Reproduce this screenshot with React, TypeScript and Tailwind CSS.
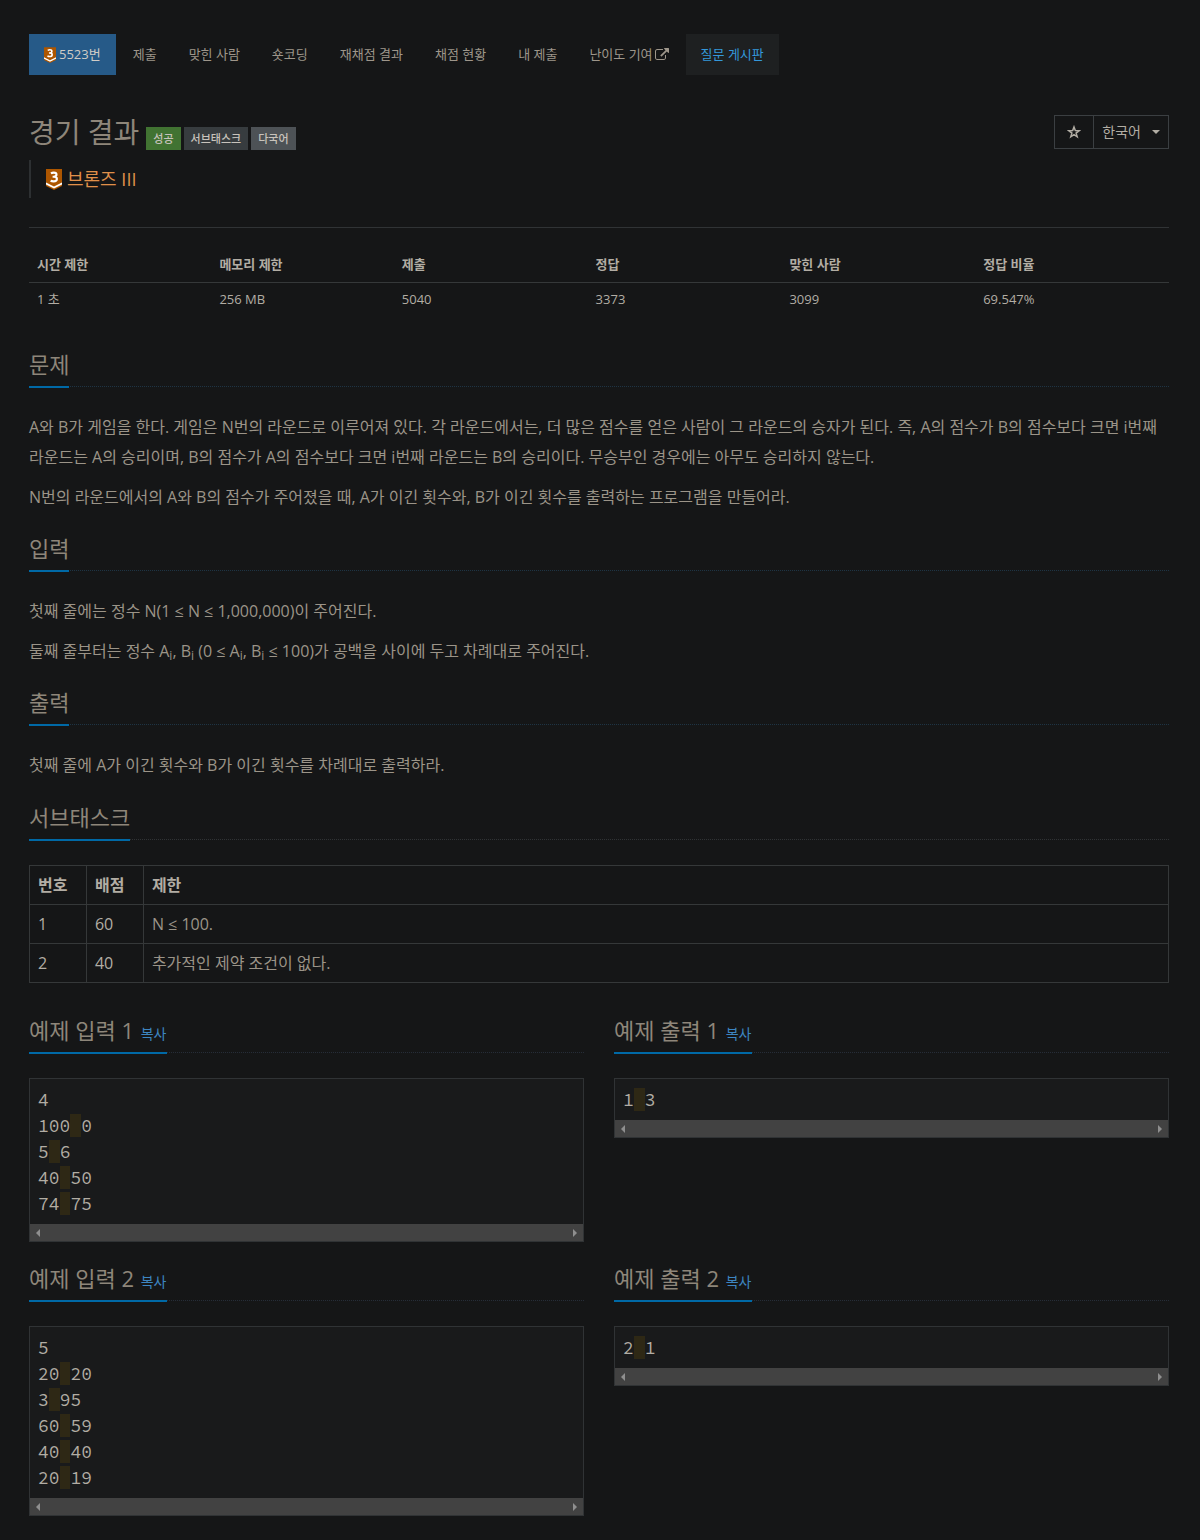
import clsx from 'clsx';
import type { ReactNode } from 'react';

const navItems = ['제출', '맞힌 사람', '숏코딩', '재채점 결과', '채점 현황', '내 제출'];

const stats = [
  { label: '시간 제한', value: '1 초', width: 'w-[16%]' },
  { label: '메모리 제한', value: '256 MB', width: 'w-[16%]' },
  { label: '제출', value: '5040', width: 'w-[17%]' },
  { label: '정답', value: '3373', width: 'w-[17%]' },
  { label: '맞힌 사람', value: '3099', width: 'w-[17%]' },
  { label: '정답 비율', value: '69.547%', width: 'w-[17%]' },
];

const subtasks = [
  { id: 1, score: 60, limit: 'N ≤ 100.' },
  { id: 2, score: 40, limit: '추가적인 제약 조건이 없다.' },
];

const samples = [
  { id: 1, input: ['4', '100 0', '5 6', '40 50', '74 75'], output: ['1 3'] },
  { id: 2, input: ['5', '20 20', '3 95', '60 59', '40 40', '20 19'], output: ['2 1'] },
];

function TierIcon({ className }: { className: string }) {
  return (
    <svg viewBox="0 0 16 21" className={className} aria-hidden="true">
      <path d="M0 0h16v17l-8 4-8-4z" fill="#ad5600" />
      <path d="M0 13.4l8 4 8-4v2.1l-8 4-8-4z" fill="#fff" />
      <path
        d="M4.9 4.3C5.8 3.8 6.8 3.6 7.8 3.6c1.7 0 2.7.8 2.7 2 0 1.4-1.1 2.2-2.8 2.2H6.6M7.7 7.8c2 0 3.2.8 3.2 2.2 0 1.6-1.3 2.4-3.3 2.4-1.2 0-2.2-.2-3-.6"
        fill="none"
        stroke="#fff"
        strokeWidth="2.1"
      />
    </svg>
  );
}

function ExternalLinkIcon() {
  return (
    <svg viewBox="0 0 1792 1792" className="size-[14px] fill-current" aria-hidden="true">
      <path d="M1408 928v320q0 119-84.5 203.5t-203.5 84.5h-832q-119 0-203.5-84.5t-84.5-203.5v-832q0-119 84.5-203.5t203.5-84.5h704q14 0 23 9t9 23v64q0 14-9 23t-23 9h-704q-66 0-113 47t-47 113v832q0 66 47 113t113 47h832q66 0 113-47t47-113v-320q0-14 9-23t23-9h64q14 0 23 9t9 23zm384-864v512q0 26-19 45t-45 19-45-19l-176-176-652 652q-10 10-23 10t-23-10l-114-114q-10-10-10-23t10-23l652-652-176-176q-19-19-19-45t19-45 45-19h512q26 0 45 19t19 45z" />
    </svg>
  );
}

function StarIcon() {
  return (
    <svg viewBox="0 0 14 14" className="size-[14px]" aria-hidden="true">
      <path
        d="M7 2l1.3 3.6 3.9.1-3.1 2.4 1.1 3.7L7 9.7l-3.2 2.1 1.1-3.7-3.1-2.4 3.9-.1z"
        fill="none"
        stroke="currentColor"
        strokeWidth="1.5"
      />
    </svg>
  );
}

function NavLink({ children, className }: { children: ReactNode; className?: string }) {
  return (
    <li>
      <a href="#" className={clsx('flex h-[41px] items-center px-[15px]', className)}>
        {children}
      </a>
    </li>
  );
}

function Badge({ children, className }: { children: ReactNode; className: string }) {
  return (
    <span className={clsx('h-[23px] px-[7px] text-[11px] leading-[23px] font-medium text-[#c8c3bc]', className)}>
      {children}
    </span>
  );
}

function Headline({ children, className = 'border-[#1e3444]' }: { children: ReactNode; className?: string }) {
  return (
    <div className={clsx('mt-5 mb-[25px] flex border-b border-dotted', className)}>
      <h2 className="-mb-[2px] border-b-2 border-[#0069a6] pb-[5px] text-[22px] leading-[33px] text-[#8e867a]">
        {children}
      </h2>
    </div>
  );
}

function Scrollbar() {
  return (
    <div className="flex h-[17px] items-center justify-between bg-[#424242] px-[6px] text-[#8f8f8f]">
      <svg viewBox="0 0 4 8" className="h-2 w-1 fill-current" aria-hidden="true">
        <path d="M4 0v8L0 4z" />
      </svg>
      <svg viewBox="0 0 4 8" className="h-2 w-1 fill-current" aria-hidden="true">
        <path d="M0 0v8l4-4z" />
      </svg>
    </div>
  );
}

function Sample({ title, lines }: { title: string; lines: string[] }) {
  return (
    <section>
      <Headline className="border-[#262d38]">
        {title}{' '}
        <button type="button" className="px-px text-sm leading-5 text-[#3d85c0]">
          복사
        </button>
      </Headline>
      <div className="border border-[#303335] bg-[#191a1b]">
        <pre className="px-2 pt-2 pb-[7px] font-['Source_Code_Pro','Liberation_Mono',monospace] text-lg leading-[26px] text-[#b2ada4]">
          {lines.map((line, i) => {
            const [first, second] = line.split(' ');
            return (
              <div key={i}>
                {first}
                {second && <span className="bg-[#2e2815]"> </span>}
                {second}
              </div>
            );
          })}
        </pre>
        <Scrollbar />
      </div>
    </section>
  );
}

export default function App() {
  return (
    <main className="min-h-screen bg-[#151617] pt-[34px] pr-[31px] pb-6 pl-[29px] font-['Open_Sans','Noto_Sans_CJK_KR',sans-serif] text-[13px] text-[#b2ada4]">
      <nav>
        <ul className="flex flex-wrap gap-[2px] text-[#9e968b]">
          <NavLink className="gap-[3px] bg-[#265a88] text-[#d0ccc6]">
            <TierIcon className="h-4 w-3" />
            5523번
          </NavLink>
          {navItems.map((item) => (
            <NavLink key={item}>{item}</NavLink>
          ))}
          <NavLink className="gap-[2px]">
            난이도 기여
            <ExternalLinkIcon />
          </NavLink>
          <NavLink className="bg-[#1e2021] text-[#3498db]">질문 게시판</NavLink>
        </ul>
      </nav>

      <header className="mt-10 border-b border-[#303335] pb-[29px]">
        <div className="flex items-start justify-between">
          <div className="flex items-end gap-[7px]">
            <h1 className="text-[28px] leading-[35px] text-[#8e867a]">경기 결과</h1>
            <div className="flex gap-[3px]">
              <Badge className="bg-[#417332]">성공</Badge>
              <Badge className="bg-[#373c3f]">서브태스크</Badge>
              <Badge className="bg-[#4d5256]">다국어</Badge>
            </div>
          </div>
          <div className="flex h-[34px] border border-[#3b3f42] text-sm">
            <button
              type="button"
              aria-label="즐겨찾기"
              className="flex w-[39px] items-center justify-center border-r border-[#3b3f42]"
            >
              <StarIcon />
            </button>
            <button type="button" className="flex items-center gap-[11px] px-2">
              한국어
              <svg viewBox="0 0 8 4" className="h-1 w-2 fill-current" aria-hidden="true">
                <path d="M0 0h8L4 4z" />
              </svg>
            </button>
          </div>
        </div>
        <div className="mt-[10px] flex h-[38px] items-center gap-[5px] border-l-2 border-[#2d3032] pl-[15px] text-lg text-[#e0904a]">
          <TierIcon className="h-[21px] w-4" />
          브론즈 III
        </div>
      </header>

      <table className="mt-5 mb-[31px] w-full table-fixed text-left">
        <thead>
          <tr className="h-[34px] border-b border-[#353839]">
            {stats.map((stat) => (
              <th key={stat.label} className={clsx('px-2 font-bold', stat.width)}>
                {stat.label}
              </th>
            ))}
          </tr>
        </thead>
        <tbody>
          <tr className="h-[35px]">
            {stats.map((stat) => (
              <td key={stat.label} className="px-2">
                {stat.value}
              </td>
            ))}
          </tr>
        </tbody>
      </table>

      <section>
        <Headline>문제</Headline>
        <div className="flex flex-col gap-[10px] text-base leading-[30px] text-[#9b9488]">
          <p>
            A와 B가 게임을 한다. 게임은 N번의 라운드로 이루어져 있다. 각 라운드에서는, 더 많은 점수를 얻은 사람이 그
            라운드의 승자가 된다. 즉, A의 점수가 B의 점수보다 크면 i번째 라운드는 A의 승리이며, B의 점수가 A의 점수보다
            크면 i번째 라운드는 B의 승리이다. 무승부인 경우에는 아무도 승리하지 않는다.
          </p>
          <p>N번의 라운드에서의 A와 B의 점수가 주어졌을 때, A가 이긴 횟수와, B가 이긴 횟수를 출력하는 프로그램을 만들어라.</p>
        </div>
      </section>

      <section>
        <Headline>입력</Headline>
        <div className="flex flex-col gap-[10px] text-base leading-[30px] text-[#9b9488]">
          <p>첫째 줄에는 정수 N(1 ≤ N ≤ 1,000,000)이 주어진다.</p>
          <p>
            둘째 줄부터는 정수 A<sub>i</sub>, B<sub>i</sub> (0 ≤ A<sub>i</sub>, B<sub>i</sub> ≤ 100)가 공백을 사이에 두고
            차례대로 주어진다.
          </p>
        </div>
      </section>

      <section>
        <Headline>출력</Headline>
        <p className="text-base leading-[30px] text-[#9b9488]">
          첫째 줄에 A가 이긴 횟수와 B가 이긴 횟수를 차례대로 출력하라.
        </p>
      </section>

      <section className="pt-px pb-[11px]">
        <Headline className="border-[#303335]">서브태스크</Headline>
        <table className="w-full table-fixed border-collapse text-left text-base">
          <thead>
            <tr className="h-[39px]">
              <th className="w-[5%] border border-[#353839] px-2">번호</th>
              <th className="w-[5%] border border-[#353839] px-2">배점</th>
              <th className="border border-[#353839] px-2">제한</th>
            </tr>
          </thead>
          <tbody>
            {subtasks.map((task) => (
              <tr key={task.id} className="h-[39px]">
                <td className="border border-[#353839] px-2">{task.id}</td>
                <td className="border border-[#353839] px-2">{task.score}</td>
                <td className="border border-[#353839] px-2 text-[#9b9488]">{task.limit}</td>
              </tr>
            ))}
          </tbody>
        </table>
      </section>

      {samples.map((sample) => (
        <div key={sample.id} className="grid grid-cols-2 items-start gap-x-[30px]">
          <Sample title={`예제 입력 ${sample.id}`} lines={sample.input} />
          <Sample title={`예제 출력 ${sample.id}`} lines={sample.output} />
        </div>
      ))}
    </main>
  );
}
